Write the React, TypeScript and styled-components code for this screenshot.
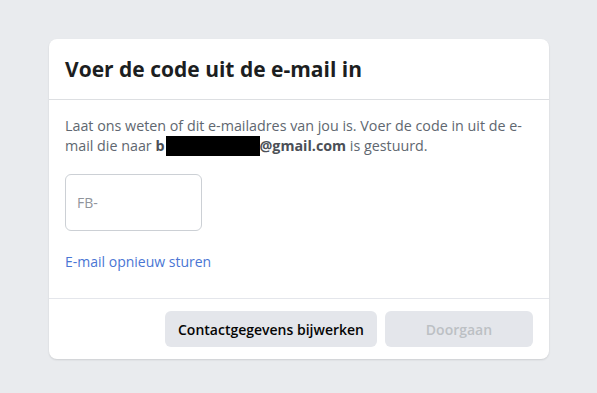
import styled, { createGlobalStyle } from "styled-components";

const GlobalStyle = createGlobalStyle`
  html, body {
    margin: 0;
    padding: 0;
    background: #e9ebee;
  }
  body {
    font-family: "Open Sans", "Liberation Sans", sans-serif;
  }
`;

export default function App() {
  return (
    <>
      <GlobalStyle />
      <Page>
        <Card>
          <Header>
            <Title>Voer de code uit de e-mail in</Title>
          </Header>
          <Body>
            <Intro>
              Laat ons weten of dit e-mailadres van jou is. Voer de code in uit
              de e-mail die naar{" "}
              <strong>
                b<Redacted />@gmail.com
              </strong>{" "}
              is gestuurd.
            </Intro>
            <CodeInput placeholder="FB-" />
            <ResendLink href="#">E-mail opnieuw sturen</ResendLink>
          </Body>
          <Footer>
            <Button>Contactgegevens bijwerken</Button>
            <Button $disabled $wide>
              Doorgaan
            </Button>
          </Footer>
        </Card>
      </Page>
    </>
  );
}

const Page = styled.div`
  width: 597px;
  height: 393px;
  padding: 39px 0 0 49px;
  box-sizing: border-box;
`;

const Card = styled.div`
  width: 500px;
  background: #fff;
  border-radius: 8px;
  box-shadow: 0 1px 2px rgba(0, 0, 0, 0.12);
`;

const Header = styled.div`
  height: 60px;
  display: flex;
  align-items: center;
  padding: 0 16px;
  border-bottom: 1px solid #dddfe2;
`;

const Title = styled.h2`
  margin: 0;
  font-size: 21px;
  font-weight: 700;
  color: #1c1e21;
`;

const Body = styled.div`
  padding: 16px 16px 0;
  display: flex;
  flex-direction: column;
  align-items: flex-start;
`;

const Intro = styled.p`
  margin: 0;
  font-size: 14.3px;
  line-height: 20px;
  color: #606770;

  strong {
    color: #4b4f56;
  }
`;

const Redacted = styled.span`
  display: inline-block;
  width: 94px;
  height: 20px;
  margin-left: 1px;
  background: #000;
  vertical-align: -5px;
`;

const CodeInput = styled.input`
  margin-top: 18px;
  width: 137px;
  height: 57px;
  box-sizing: border-box;
  border: 1px solid #ccd0d5;
  border-radius: 6px;
  padding: 0 11px;
  font-family: inherit;
  font-size: 14px;
  color: #1c1e21;
  outline: none;

  &::placeholder {
    color: #90949c;
  }
`;

const ResendLink = styled.a`
  margin: 21px 0 26px;
  font-size: 14px;
  line-height: 20px;
  color: #4a76d4;
  text-decoration: none;
`;

const Footer = styled.div`
  display: flex;
  justify-content: flex-end;
  gap: 8px;
  padding: 12px 16px;
  border-top: 1px solid #e4e6eb;
`;

const Button = styled.button<{ $disabled?: boolean; $wide?: boolean }>`
  height: 36px;
  padding: 0 13px;
  min-width: ${(p) => (p.$wide ? "148px" : "0")};
  border: none;
  border-radius: 6px;
  background: #e4e6eb;
  font-family: inherit;
  font-size: 14px;
  font-weight: 600;
  color: ${(p) => (p.$disabled ? "#bcc0c4" : "#050505")};
  cursor: ${(p) => (p.$disabled ? "default" : "pointer")};
`;
